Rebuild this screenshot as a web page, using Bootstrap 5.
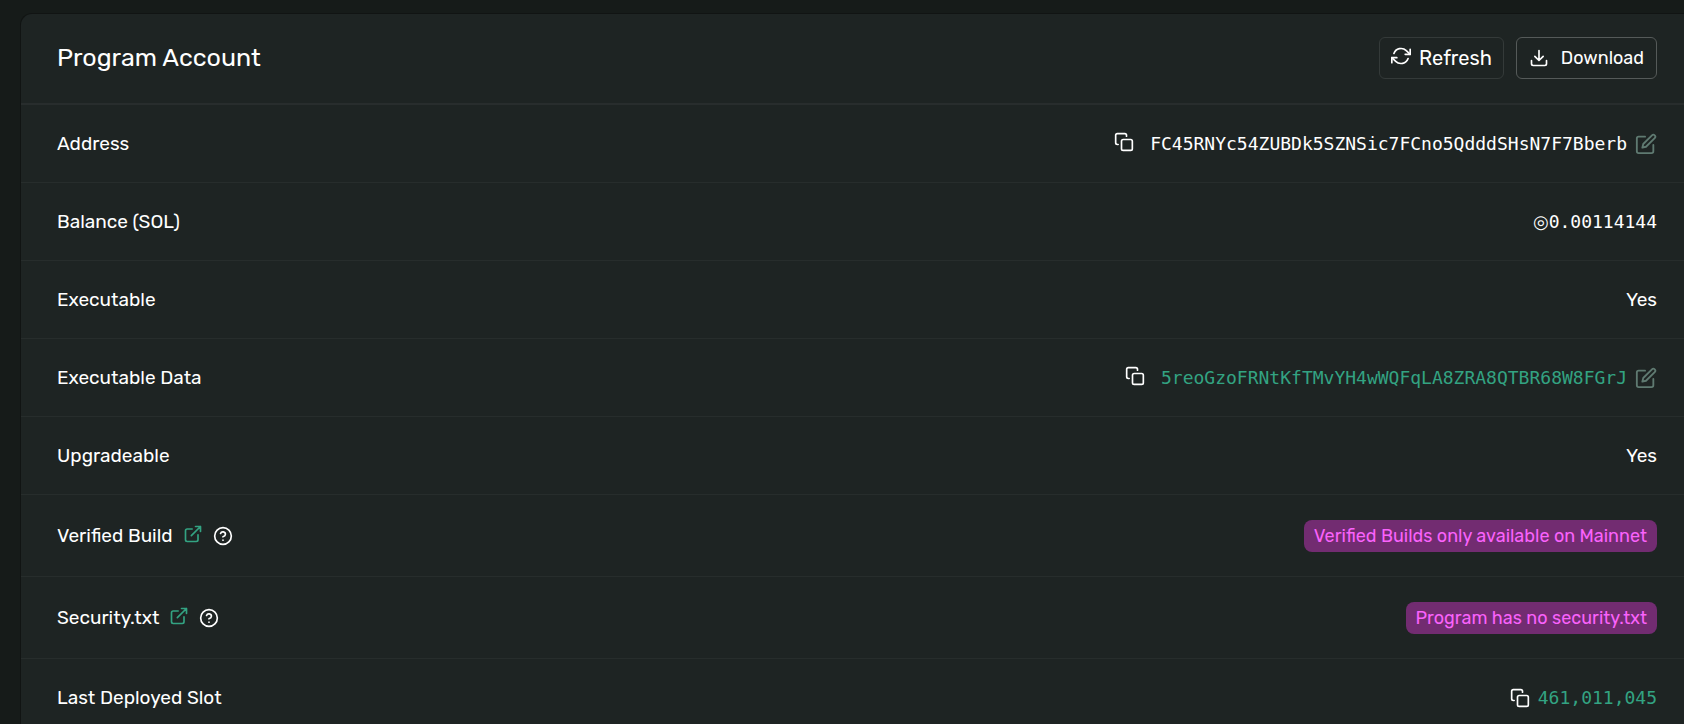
<!DOCTYPE html>
<html lang="en">
<head>
<meta charset="utf-8">
<meta name="viewport" content="width=device-width, initial-scale=1">
<title>Program Account</title>
<link href="https://cdn.jsdelivr.net/npm/bootstrap@5.3.0/dist/css/bootstrap.min.css" rel="stylesheet">
<style>
  body { background: #161b19; color: #fff; font-family: Rubik, Roboto, sans-serif; font-size: 19px; line-height: 30px; }
  .page { height: 100vh; overflow: hidden; padding: 13px 0 0 20px; }
  .account-card { background: #1e2423; border: 1px solid #111413; border-right: 0; border-radius: 12px 0 0 0; color: #fff; }
  .account-head { background: none; border-bottom: 2px solid #282d2d; padding: 23px 27px 24px 36px; }
  .account-title { font-size: 25px; line-height: 30px; font-weight: 400; }
  .tools { gap: 12px; }
  .btn-tool { --bs-btn-color: #fff; --bs-btn-hover-color: #fff; --bs-btn-hover-bg: #282d2d; --bs-btn-active-color: #fff;
    --bs-btn-border-color: #343a39; --bs-btn-hover-border-color: #555a59; --bs-btn-border-radius: 6px;
    --bs-btn-padding-x: 11px; --bs-btn-padding-y: 5px; --bs-btn-font-size: 20px; line-height: 30px; gap: 8px; }
  .btn-save { --bs-btn-border-color: #555a59; --bs-btn-font-size: 18px; --bs-btn-padding-x: 12px; gap: 12px; }
  .account-table { --bs-table-bg: transparent; --bs-table-color: #fff; }
  .account-table th, .account-table td { border-bottom: 1px solid #272d2c; padding: 24px 27px 23px 36px; font-weight: 400; white-space: nowrap; }
  .account-table .row-note th, .account-table .row-note td { padding-top: 25px; padding-bottom: 24px; }
  .label-tools { gap: 10px; }
  .mono { font-family: "DejaVu Sans Mono", monospace; font-size: 18px; }
  .sol { font-family: "DejaVu Sans", sans-serif; font-size: 18px; }
  .accent, .accent:hover { color: #33a382; text-decoration: none; }
  .icon-btn { background: none; border: 0; padding: 0; color: #fff; line-height: 1; }
  .icon-btn.edit { color: #5f7a71; }
  .note { background: #722c71; color: #fa62fc; border-radius: 8px; font-size: 18px; line-height: 32px; font-weight: 400; padding: 0 10px; }
  svg { display: block; fill: none; stroke: currentColor; stroke-width: 2; stroke-linecap: round; stroke-linejoin: round; }
</style>
</head>
<body>
<svg class="d-none" xmlns="http://www.w3.org/2000/svg">
  <symbol id="copy" viewBox="0 0 24 24"><rect x="9" y="9" width="13" height="13" rx="2"/><path d="M5 15H4a2 2 0 0 1-2-2V4a2 2 0 0 1 2-2h9a2 2 0 0 1 2 2v1"/></symbol>
  <symbol id="edit" viewBox="0 0 24 24"><path d="M11 4H4a2 2 0 0 0-2 2v14a2 2 0 0 0 2 2h14a2 2 0 0 0 2-2v-7"/><path d="M18.5 2.5a2.121 2.121 0 0 1 3 3L12 15l-4 1 1-4 9.500-9.500z"/></symbol>
  <symbol id="ext" viewBox="0 0 24 24"><path d="M18 13v6a2 2 0 0 1-2 2H5a2 2 0 0 1-2-2V8a2 2 0 0 1 2-2h6"/><path d="M15 3h6v6M10 14 21 3"/></symbol>
  <symbol id="help" viewBox="0 0 24 24"><circle cx="12" cy="12" r="10"/><path d="M9.090 9a3 3 0 0 1 5.830 1c0 2-3 3-3 3M12 17h.01"/></symbol>
</svg>
<main class="page">
  <section class="card account-card">
    <header class="card-header account-head d-flex align-items-center justify-content-between">
      <h1 class="account-title mb-0">Program Account</h1>
      <div class="d-flex tools">
        <button type="button" class="btn btn-tool d-flex align-items-center">
          <svg class="mb-1" width="20" height="20" viewBox="0 0 24 24"><path d="M23 4v6h-6M1 20v-6h6"/><path d="M3.510 9a9 9 0 0 1 14.850-3.360L23 10M1 14l4.640 4.360A9 9 0 0 0 20.490 15"/></svg>
          Refresh</button>
        <button type="button" class="btn btn-tool btn-save d-flex align-items-center">
          <svg width="20" height="20" viewBox="0 0 24 24"><path d="M21 15v4a2 2 0 0 1-2 2H5a2 2 0 0 1-2-2v-4M7 10l5 5 5-5M12 15V3"/></svg>
          Download</button>
      </div>
    </header>
    <table class="table account-table align-middle mb-0">
      <tbody>
        <tr><th scope="row">Address</th>
          <td><div class="d-flex align-items-center justify-content-end">
            <button type="button" class="icon-btn me-3 mb-1" aria-label="Copy address"><svg width="20" height="20"><use href="#copy"/></svg></button>
            <span class="mono">FC45RNYc54ZUBDk5SZNSic7FCno5QdddSHsN7F7Bberb</span>
            <button type="button" class="icon-btn edit ms-2" aria-label="Edit address label"><svg width="22" height="22"><use href="#edit"/></svg></button>
          </div></td></tr>
        <tr><th scope="row">Balance (SOL)</th>
          <td><div class="d-flex align-items-center justify-content-end"><span class="sol">◎</span><span class="mono">0.00114144</span></div></td></tr>
        <tr><th scope="row">Executable</th><td class="text-end">Yes</td></tr>
        <tr><th scope="row">Executable Data</th>
          <td><div class="d-flex align-items-center justify-content-end">
            <button type="button" class="icon-btn me-3 mb-1" aria-label="Copy data address"><svg width="20" height="20"><use href="#copy"/></svg></button>
            <a href="#data" class="mono accent">5reoGzoFRNtKfTMvYH4wWQFqLA8ZRA8QTBR68W8FGrJ</a>
            <button type="button" class="icon-btn edit ms-2" aria-label="Edit data label"><svg width="22" height="22"><use href="#edit"/></svg></button>
          </div></td></tr>
        <tr><th scope="row">Upgradeable</th><td class="text-end">Yes</td></tr>
        <tr class="row-note"><th scope="row"><div class="d-flex align-items-center label-tools">Verified Build
            <a href="#verified" class="accent mb-1" aria-label="About verified builds"><svg width="20" height="20"><use href="#ext"/></svg></a>
            <button type="button" class="icon-btn" aria-label="Help on verified builds"><svg width="20" height="20"><use href="#help"/></svg></button></div></th>
          <td><div class="d-flex justify-content-end"><span class="badge note">Verified Builds only available on Mainnet</span></div></td></tr>
        <tr class="row-note"><th scope="row"><div class="d-flex align-items-center label-tools">Security.txt
            <a href="#security" class="accent mb-1" aria-label="About security.txt"><svg width="20" height="20"><use href="#ext"/></svg></a>
            <button type="button" class="icon-btn" aria-label="Help on security.txt"><svg width="20" height="20"><use href="#help"/></svg></button></div></th>
          <td><div class="d-flex justify-content-end"><span class="badge note">Program has no security.txt</span></div></td></tr>
        <tr><th scope="row">Last Deployed Slot</th>
          <td><div class="d-flex align-items-center justify-content-end">
            <button type="button" class="icon-btn me-2" aria-label="Copy slot"><svg width="20" height="20"><use href="#copy"/></svg></button>
            <a href="#slot" class="mono accent">461,011,045</a>
          </div></td></tr>
      </tbody>
    </table>
  </section>
</main>
<script src="https://cdn.jsdelivr.net/npm/bootstrap@5.3.0/dist/js/bootstrap.bundle.min.js"></script>
</body>
</html>
